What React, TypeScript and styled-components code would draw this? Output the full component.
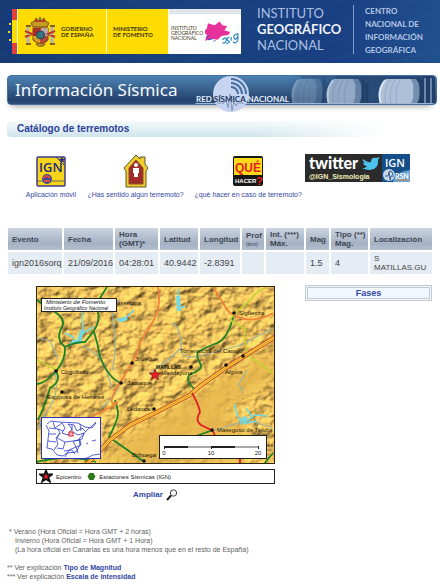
import React from 'react';
import styled, { createGlobalStyle } from 'styled-components';

const GlobalStyle = createGlobalStyle`
  * { box-sizing: border-box; }
  body {
    margin: 0;
    background: #fff;
    color: #444;
    font-family: "Liberation Sans", Arial, sans-serif;
  }
  a { color: #33479f; text-decoration: none; }
  svg { display: block; }
`;

const Header = styled.header`
  display: flex;
  align-items: flex-start;
  padding: 5px 7px 6px;
  color: #d8e3f4;
  font-family: Lato, sans-serif;
  background:
    repeating-linear-gradient(165deg, transparent 0 17px, rgba(120, 165, 220, 0.06) 17px 18px),
    linear-gradient(100deg, #173a72, #19427f 45%, #193f82 75%, #21508f);
`;

const Government = styled.div`
  display: flex;
  height: 45px;
  margin-top: 4px;
  color: #3c3510;
`;

const EuropeStrip = styled.svg`
  width: 10px;
  height: 45px;
`;

const GovPanel = styled.div<{ $width: number; $white?: boolean }>`
  display: flex;
  align-items: center;
  gap: ${(p) => (p.$white ? 2 : 5)}px;
  width: ${(p) => p.$width}px;
  padding: ${(p) => (p.$white ? '4px 2px 0' : '0 4px 0 6px')};
  border-left: 1px solid #fffbd5;
  background: ${(p) => (p.$white ? 'linear-gradient(#e2e5ec 5px, #fff 5px)' : '#fedc02')};
  font-weight: ${(p) => (p.$white ? 400 : 700)};
  font-size: ${(p) => (p.$white ? 5 : 6)}px;
  line-height: ${(p) => (p.$white ? 5 : 6)}px;
  white-space: nowrap;
`;

const Institute = styled.div`
  margin-left: 16px;
  width: 97px;
  height: 49px;
  font-size: 13px;
  line-height: 16px;
  color: #a9bfe0;
  border-right: 1px solid #7f9bc8;
  white-space: nowrap;
  strong { font-weight: 700; color: #eef3fb; }
`;

const Centre = styled.div`
  margin-left: 11px;
  font-size: 8px;
  line-height: 13px;
  font-weight: 700;
  color: #b3c6e4;
  white-space: nowrap;
`;

const Banner = styled.div`
  display: flex;
  justify-content: space-between;
  align-items: center;
  height: 30px;
  margin: 12px 3px 0 7px;
  padding-left: 7px;
  border: 1px solid #456f9e;
  border-radius: 4px;
  background: linear-gradient(#4a82b4, #3c6693 40%, #23426d 85%, #2d4d7b);
  box-shadow: -1px 6px 6px -5px rgba(0, 0, 0, 0.4);
`;

const BannerTitle = styled.h1`
  margin: 0;
  color: #f5f9ff;
  font: 400 17px/28px "Noto Sans", sans-serif;
  white-space: nowrap;
`;

const BannerArt = styled.svg`
  flex: none;
  width: 242px;
  height: 30px;
  overflow: visible;
`;

const SectionTitle = styled.h2`
  width: 86%;
  height: 16px;
  margin: 16px 0 0 7px;
  padding-left: 10px;
  border-radius: 4px 0 0 4px;
  background: linear-gradient(90deg, transparent 65%, #fff), linear-gradient(#f5fafb, #cfe5ec);
  color: #2c3f9c;
  font-size: 10px;
  line-height: 15px;
`;

const Shortcuts = styled.nav`
  display: grid;
  grid-template-columns: 58fr 112fr 114fr 104fr;
  padding: 17px 30px 0 22px;
  font-size: 7px;
  line-height: 10px;
`;

const Shortcut = styled.a`
  display: flex;
  flex-direction: column;
  align-items: center;
  gap: 2px;
  white-space: nowrap;
`;

const Quake = styled.table`
  width: calc(100% - 12px);
  margin: 26px 6px 0;
  table-layout: fixed;
  border-spacing: 2px;
  font-size: 9px;
  line-height: 9px;
  text-align: left;
  th, td { height: 22px; padding: 0 0 0 4px; vertical-align: middle; }
  th { font-size: 8px; background: linear-gradient(#cbd3df, #a4b2c4 70%, #b2bfcf); color: #3f4754; }
  td { background: #e6ecf4; }
  td:last-child { font-size: 8px; }
  small { display: block; font-size: 6px; line-height: 8px; font-weight: 400; }
`;

const Detail = styled.main`
  display: flex;
  justify-content: space-between;
  align-items: flex-start;
  padding: 9px 8px 0 36px;
`;

const Figure = styled.figure`
  display: flex;
  flex-direction: column;
  align-items: center;
  width: 239px;
  margin: 1px 0 0;
`;

const MapArt = styled.svg`
  width: 239px;
  height: 178px;
`;

const Legend = styled.figcaption`
  display: flex;
  align-items: center;
  gap: 6px;
  width: 100%;
  height: 15px;
  margin-top: 5px;
  padding-left: 2px;
  border: 1px solid #222;
  color: #222;
  font-size: 6px;
`;

const LegendItem = styled.span`
  display: flex;
  align-items: center;
  gap: 3px;
`;

const Enlarge = styled.a`
  display: flex;
  align-items: center;
  gap: 3px;
  margin-top: 5px;
  font-size: 8px;
  line-height: 12px;
  font-weight: 700;
`;

const Phases = styled.a`
  width: 127px;
  height: 16px;
  border: 3px double #c3c9d1;
  background: #f1f7fe;
  font-size: 9px;
  line-height: 10px;
  font-weight: 700;
  text-align: center;
`;

const Notes = styled.footer`
  padding: 26px 7px 0;
  font-size: 7px;
  line-height: 9px;
  color: #626262;
  p { margin: 0 0 9px; }
`;

const NoteLine = styled.span<{ $indent: number }>`
  display: block;
  padding-left: ${(p) => p.$indent}px;
`;

const STAR = '0,-6 1.5,-2 6,-2 2.4,0.8 3.8,5 0,2.5 -3.8,5 -2.4,0.8 -6,-2 -1.5,-2';

const CoatOfArms = () => (
  <svg width="32" height="32" viewBox="0 0 32 32">
    <path d="M7 7q9-6 18 0l-2 4H9z" fill="#c99a24" stroke="#77521a" />
    <path d="M10 6l2-4 3 3 1-4 1 4 3-3 2 4" fill="#b83a2b" stroke="#8b6420" />
    <path d="M9 12h15v12q-7 8-15 0z" fill="#b94836" stroke="#70452a" />
    <path d="M16 12v8H9v-8z" fill="#a92d2b" />
    <path d="M17 12h7v8h-7z" fill="#bba6a4" />
    <path d="M9 20h7v7q-7-1-7-7z" fill="#d3a31d" />
    <circle cx="16.500" cy="19" r="4" fill="#35767b" stroke="#273d60" />
    <path d="M4 10v17M28 10v17" stroke="#b6b5aa" strokeWidth="3" />
    <path d="M2 10h5M26 10h5M2 28h5M26 28h5" stroke="#8a5f24" strokeWidth="2" />
    <path d="M1 15l7 3-7 3M31 15l-7 3 7 3" fill="none" stroke="#bd352c" strokeWidth="2" />
    <path d="M12 28q5 4 9 0" fill="none" stroke="#9a7624" strokeWidth="2" />
  </svg>
);

const Drum = ({ x, w, o }: { x: number; w: number; o: number }) => (
  <g opacity={o}>
    <path d={`M${x + 8} 4h${w - 8}q-5 12 0 25H${x + 2}q-5-16 6-25z`} fill="#adc0d7" />
    <path d={`M${x + 7} 5q-8 11-4 24`} fill="none" stroke="#dce6f1" strokeWidth="2" />
    <path d={`M${x + 12} 5q-8 11-4 24M${x + 17} 5q-7 11-4 24M${x + 22} 5q-6 11-3 24`} fill="none" stroke="#91abc8" />
    <path d={`M${x + w} 4q8 10 1 25h-6q6-14 0-25z`} fill="#738eae" />
    <path d={`M${x + w + 5} 2v27M${x + w + 9} 8v20`} stroke="#203d66" strokeWidth="3" />
    <path d={`M${x + 10} 2h${w - 4}v3`} fill="none" stroke="#284a76" strokeWidth="2" />
  </g>
);

const Town = ({ x, y, tx, ty, name }: { x: number; y: number; tx: number; ty: number; name: string }) => (
  <g>
    <circle cx={x} cy={y} r="1.8" fill="#111" />
    <text x={tx} y={ty}>{name}</text>
  </g>
);

const QuakeMap = () => (
  <MapArt viewBox="36 286 239 178" role="img" aria-label="Mapa del epicentro">
    <defs>
      <filter id="relief" x="0" y="0" width="100%" height="100%" colorInterpolationFilters="sRGB">
        <feTurbulence type="fractalNoise" baseFrequency="0.07 0.085" numOctaves="3" seed="8" />
        <feColorMatrix values="0 0 0 0 0  0 0 0 0 0  0 0 0 0 0  1 0 0 0 0" />
        <feDiffuseLighting surfaceScale="4" diffuseConstant="1.25" lightingColor="#efc15c">
          <feDistantLight azimuth="225" elevation="55" />
        </feDiffuseLighting>
      </filter>
      <filter id="soft"><feGaussianBlur stdDeviation="7" /></filter>
    </defs>
    <rect x="36" y="286" width="239" height="178" fill="#e6bb5c" />
    <rect x="36" y="286" width="239" height="178" filter="url(#relief)" opacity="0.85" />
    <path d="M275 345L195 392L120 440L95 464H240L250 430L225 412L275 380z" fill="#e9b94f" opacity="0.9" filter="url(#soft)" />
    <g fill="none" stroke="#9cb3a0" strokeWidth="1.200">
      <path d="M120 300q-8 6-7 17t2 24-3 30M36 337l14 4 8 18M83 346q16 8 22 20l7 22M173 322q10 12 8 26t27 6 30-8 35-18M181 348q-12 12-31 25M121 383q-8 18-20 24M247 370l-8 14 4 9M55 371q4 22-4 34t-14 24M213 431l35-11 25 8" />
    </g>
    <g fill="none" stroke="#73d9e3" strokeLinejoin="round">
      <path d="M83 308l-1 12 1 10-3 10M65 333l8 4 3 6M80 335l13-8M70 343l12-2M116 320l10-2 8-8M178 289l1 20 6-3M234 404l4 13 4 7 13-9 12 1M242 424l15-3M246 408l6 9" strokeWidth="1.500" />
      <path d="M82 330l-3 12h-7M119 321l8-3M178 296l1 15M241 420l6-2" strokeWidth="4" />
    </g>
    <g fill="none" stroke="#218126" strokeWidth="1.800">
      <path d="M37 300Q45 307 55 312Q66 319 62 327Q55 339 65 347Q75 342 85 342L93 332Q103 318 95 306L107 287M94 332Q98 344 100 357Q109 379 121 383M65 347Q66 360 56 371Q46 383 37 384M56 371q6 10-6 17-5 18-12 32" />
      <path d="M234 314q-6 25-17 29t-19 9q-2 5 2 11t-7 10 2 17M115 400q2 6 3 12t-9 25L143 461M36 462q35-8 60 0M160 450q30-12 53-20M273 453l-9 11" />
    </g>
    <g fill="none" stroke="#f08338" strokeWidth="1.800">
      <path d="M158 287q4 22-7 38t-13 24-17 32-6 22-20 12-18-1M213 287l15 24 6 4q18 10 39-2M60 457l-3 7" />
    </g>
    <path d="M267 287q-11 4-17 13l-16 14-4 6 15 9q-2 14 4 27l24 17M37 360l18 9" fill="none" stroke="#c8cf35" strokeWidth="1.800" />
    <path d="M275 337L243 357L227 367L200 386L190 395L155 413L130 425L110 440L87 464" fill="none" stroke="#cc5428" strokeWidth="4.500" />
    <path d="M275 337L243 357L227 367L200 386L190 395L155 413L130 425L110 440L87 464" fill="none" stroke="#ffe23e" strokeWidth="2.500" />
    <path d="M275 337L243 357L227 367L200 386L190 395L155 413L130 425L110 440L87 464" fill="none" stroke="#d36a2b" strokeWidth="0.700" />
    <path d="M192 393q7 12 8 19-6 10 3 14l10 5 2 5M240 458v6" fill="none" stroke="#e01f27" strokeWidth="1.800" />
    <g fontFamily="Liberation Sans" fontSize="6" fill="#1f1a0c">
      <text x="117" y="305">asencina</text>
      <Town x={56} y={371} tx={61} ty={374} name="Cogolludo" />
      <Town x={132} y={363} tx={135} ty={361} name="Jirueque" />
      <Town x={121} y={383} tx={127} ty={385} name="Jadraque" />
      <Town x={234} y={313} tx={239} ty={315} name="Sigüenza" />
      <Town x={243} y={356} tx={180} ty={353} name="Torremocha del Campo" />
      <Town x={226} y={365} tx={225} ty={374} name="Algora" />
      <Town x={191} y={367} tx={161} ty={375} name="Mandayona" />
      <Town x={62} y={392} tx={47} ty={399} name="Espinosa de Henares" />
      <Town x={154} y={409} tx={127} ty={411} name="Ledanca" />
      <Town x={212} y={430} tx={217} ty={432} name="Masegoso de Tajuña" />
      <Town x={144} y={461} tx={132} ty={457} name="Brihuega" />
      <text x="267" y="447">es</text>
      <text x="156" y="369" fontSize="5" fontWeight="700">MATILLAS</text>
    </g>
    <polygon points={STAR} transform="translate(155 375)" fill="#ee1c24" stroke="#5c1515" strokeWidth="0.600" />
    <g fill="#fff" stroke="#222">
      <rect x="41.500" y="298.500" width="75" height="13" />
      <rect x="41.500" y="417.500" width="59" height="41" stroke="#2a35b5" />
      <rect x="159.500" y="435.500" width="107" height="23" />
    </g>
    <g fontFamily="Liberation Sans" fontStyle="italic" fill="#111">
      <text x="46" y="304" fontSize="6">Ministerio de Fomento</text>
      <text x="44" y="310" fontSize="5">Instituto Geográfico Nacional</text>
    </g>
    <g fill="none" stroke="#2c39c5" strokeWidth="0.800">
      <path d="M47 424l4-3 8 1 19 1 7 4 7 1 4-5M46 425l3 6-2 17 5 1 5 6 6 1 4-3 9-1 4-7-1-6 8-9 5-4 4-4M80 459l7-1 6-3 8-1" />
      <path d="M49 428l9 1 2 4-4 5 2 6-4 6M53 422l2 6 7-5 3 5-3 5 6 2 4-6-4-5 6 1 3 6 5-3 4 4M60 433l-3 5 8 4-2 7-6-1M65 442l8-1 3 6-7 3-4 7M68 435l5-3 5 3 6-2-2 6-8 2M73 441l7-1 1 5-5 2 2 6M64 451l8-1 3 4M86 444l2-1M92 441l4-1" />
      <path d="M49 434l7 0M48 441l8 1M58 429l5 2M72 425v6M80 424l1 7" />
    </g>
    <rect x="69" y="432" width="4" height="4" fill="#fbb" stroke="#e01f27" />
    <path d="M164 447h94" stroke="#aaa" strokeWidth="2" />
    <path d="M164 447h24M212 447h23" stroke="#222" strokeWidth="2" />
    <path d="M164.500 446v3M211.500 446v3M258.500 446v3" stroke="#222" />
    <g fontFamily="Liberation Sans" fontSize="6" fill="#222" textAnchor="middle">
      <text x="164" y="455">0</text>
      <text x="211" y="455">10</text>
      <text x="258" y="455">20</text>
    </g>
    <rect x="36.500" y="286.500" width="238" height="177" fill="none" stroke="#30260f" />
  </MapArt>
);

const COLUMNS = [54, 49, 43, 38, 40, 22, 38, 23, 37, 62];

export default function App() {
  return (
    <>
      <GlobalStyle />
      <Header>
        <Government>
          <EuropeStrip viewBox="0 0 10 45">
            <path d="M0 0h5v45H0z" fill="#123b83" />
            <path d="M5 0h5v45H5z" fill="#fedc02" />
            <path d="M5 0h5v11H5zM5 34h5v11H5z" fill="#e4403a" />
            <path d="M2 15h2M1 23h2M2 31h2" stroke="#fedc02" strokeWidth="2" />
          </EuropeStrip>
          <GovPanel $width={89}><CoatOfArms /><div>GOBIERNO<br />DE ESPAÑA</div></GovPanel>
          <GovPanel $width={62}><div>MINISTERIO<br />DE FOMENTO</div></GovPanel>
          <GovPanel $width={73} $white>
            <div>INSTITUTO<br />GEOGRÁFICO<br />NACIONAL</div>
            <svg width="35" height="26" viewBox="0 0 35 26">
              <path d="M3 2l7 2 5-4 3 4 5 1-3 4 6 2-2 3-7 1-4 4-6-1-7 2 2-6-4-3 4-4z" fill="#e9319c" />
              <path d="M1 17l3-2M3 19l5-1M9 21l2-2" stroke="#2a55b5" />
              <path d="M18 19q4-4 4 0t-4 3M25 16q-4 2-1 4t-2 3M27 16v4M34 13q-5 0-4 4t4-2v-3 7q-2 5-5 2" fill="none" stroke="#2786bd" strokeWidth="1.200" />
            </svg>
          </GovPanel>
        </Government>
        <Institute>INSTITUTO<br /><strong>GEOGRÁFICO</strong><br />NACIONAL</Institute>
        <Centre>CENTRO<br />NACIONAL DE<br />INFORMACIÓN<br />GEOGRÁFICA</Centre>
      </Header>

      <Banner>
        <BannerTitle>Información Sísmica</BannerTitle>
        <BannerArt viewBox="195 75 242 30">
          <defs>
            <linearGradient id="room" x1="0" x2="1">
              <stop offset="0" stopColor="#2b5180" stopOpacity="0" />
              <stop offset="0.400" stopColor="#2b5180" />
              <stop offset="1" stopColor="#213e68" />
            </linearGradient>
            <clipPath id="band"><rect x="195" y="76" width="241" height="28" rx="3" /></clipPath>
          </defs>
          <g clipPath="url(#band)">
            <rect x="285" y="76" width="151" height="28" fill="url(#room)" />
            <g transform="translate(0 75)">
              <Drum x={292} w={28} o={0.4} />
              <Drum x={327} w={32} o={0.8} />
              <Drum x={379} w={38} o={1} />
            </g>
            <path d="M426 78v25M432 78v25" stroke="#6e88a8" strokeWidth="2" />
            <path d="M195 103.500h241" stroke="#9db4d4" />
          </g>
          <circle cx="232" cy="94" r="18" fill="#c6d4f1" />
          <path d="M232 79a15 15 0 0 1 15 15M232 83a11 11 0 0 1 11 11M232 87a7 7 0 0 1 7 7" fill="none" stroke="#456d9f" strokeWidth="2" />
          <path d="M218 103h7l2-3 2 8 2-14 2 17 2-10 2 5 2-3h6" fill="none" stroke="#8296b6" strokeWidth="1" />
          <text x="197" y="102" fontFamily="Lato" fontSize="8" fontWeight="700" fill="#e4ecf9">
            RED <tspan fill="#19335d">SÍSMICA</tspan> NACIONAL
          </text>
        </BannerArt>
      </Banner>

      <SectionTitle>Catálogo de terremotos</SectionTitle>

      <Shortcuts>
        <Shortcut href="#movil">
          <svg width="30" height="34" viewBox="0 0 30 34">
            <rect x="1" y="3" width="28" height="29" rx="1" fill="#f7d51b" stroke="#3d3e8c" strokeWidth="1.500" />
            <path d="M20 3l9 9" stroke="#3d3e8c" />
            <polygon points={STAR} transform="translate(26 6) scale(.6)" fill="#292b78" />
            <text x="3" y="18" fontFamily="Open Sans" fontWeight="600" fontSize="13" fill="#292b78">IGN</text>
            <path d="M2 27h26" stroke="#6c6751" />
            <circle cx="11" cy="25" r="5" fill="#414b91" />
            <path d="M7 24q4-4 7 0M8 27h6" stroke="#d64b47" strokeWidth="2" fill="none" />
          </svg>
          Aplicación móvil
        </Shortcut>
        <Shortcut href="#sentido">
          <svg width="26" height="34" viewBox="0 0 26 34">
            <path d="M13 1l4 4V3h5v7l3 4-2 3v16H3V17l-2-3z" fill="#efcd2b" stroke="#5b5430" />
            <path d="M13 6l7 8v16H6V14z" fill="#a02d2c" stroke="#8a4a2a" />
            <circle cx="13" cy="11" r="2" fill="#fff" />
            <path d="M10 14h6v5h-1v4h-4v-4h-1z" fill="#fff" />
          </svg>
          ¿Has sentido algún terremoto?
        </Shortcut>
        <Shortcut href="#quehacer">
          <svg width="32" height="34" viewBox="0 0 32 34">
            <rect x="1" y="2" width="30" height="30" rx="2" fill="#171717" />
            <path d="M2 4h28v17H2z" fill="#ffd91b" />
            <g fontFamily="Liberation Sans" fontWeight="700">
              <text x="3" y="18" fontSize="12" fill="#df2422">QUÉ</text>
              <text x="3" y="29" fontSize="6" fill="#fff">HACER</text>
              <text x="24" y="31" fontSize="11" fill="#e32420">?</text>
            </g>
          </svg>
          ¿qué hacer en caso de terremoto?
        </Shortcut>
        <Shortcut href="#twitter">
          <svg width="105" height="28" viewBox="0 0 105 28">
            <path d="M0 0h77v28H0z" fill="#2b2b2b" />
            <path d="M77 0h28v28H77z" fill="#154f8a" />
            <text x="4" y="15" fontFamily="Lato" fontWeight="900" fontSize="16" fill="#fff">twitter</text>
            <path d="M58 5q4 4 8 3 0-5 5-4l4-1-2 3q1 9-8 10-5 0-8-2 4 0 5-2-3 0-4-3h2q-3-2-2-4z" fill="#4cc3ef" />
            <text x="4" y="25" fontFamily="Liberation Sans" fontWeight="700" fontSize="7" fill="#f2efb9">@IGN_Sismologia</text>
            <text x="80" y="13" fontFamily="Open Sans" fontWeight="600" fontSize="11" fill="#fff">IGN</text>
            <path d="M88 28q2-10 17-12v12z" fill="#6aa5d5" />
            <circle cx="84" cy="21" r="6" fill="#c6d7ea" />
            <path d="M84 17q4 0 4 4M80 22h3l1-4 1 8 1-4h3" stroke="#36598a" fill="none" />
            <text x="90" y="25" fontFamily="Lato" fontWeight="700" fontSize="7" fill="#fff">RSN</text>
            <path d="M92 26h12" stroke="#d98640" />
          </svg>
        </Shortcut>
      </Shortcuts>

      <Quake>
        <colgroup>{COLUMNS.map((w, i) => <col key={i} width={w} />)}</colgroup>
        <thead>
          <tr>
            <th>Evento</th><th>Fecha</th><th>Hora<br />(GMT)*</th><th>Latitud</th><th>Longitud</th>
            <th>Prof<small>(km)</small></th><th>Int. (***)<br />Máx.</th><th>Mag</th><th>Tipo (**)<br />Mag.</th><th>Localización</th>
          </tr>
        </thead>
        <tbody>
          <tr>
            <td>ign2016sorq</td><td>21/09/2016</td><td>04:28:01</td><td>40.9442</td><td>-2.8391</td>
            <td /><td /><td>1.5</td><td>4</td><td>S MATILLAS.GU</td>
          </tr>
        </tbody>
      </Quake>

      <Detail>
        <Figure>
          <QuakeMap />
          <Legend>
            <LegendItem>
              <svg width="14" height="13" viewBox="-7 -6.500 14 13">
                <polygon points={STAR} fill="#e01f27" stroke="#111" strokeWidth="1.800" />
              </svg>
              Epicentro
            </LegendItem>
            <LegendItem>
              <svg width="9" height="9" viewBox="0 0 9 9"><path d="M2.500 1h4l2 3.500-2 3.500h-4l-2-3.500z" fill="#2f7a1e" /></svg>
              Estaciones Sísmicas (IGN)
            </LegendItem>
          </Legend>
          <Enlarge href="#ampliar">
            Ampliar
            <svg width="12" height="12" viewBox="0 0 12 12">
              <circle cx="7.500" cy="4" r="3.200" fill="#eef0f2" stroke="#444" />
              <path d="M5 6.500L1 11" stroke="#222" strokeWidth="2" />
            </svg>
          </Enlarge>
        </Figure>
        <Phases href="#fases">Fases</Phases>
      </Detail>

      <Notes>
        <p>
          <NoteLine $indent={2}>* Verano (Hora Oficial = Hora GMT + 2 horas)</NoteLine>
          <NoteLine $indent={8}>Invierno (Hora Oficial = Hora GMT + 1 Hora)</NoteLine>
          <NoteLine $indent={8}>(La hora oficial en Canarias es una hora menos que en el resto de España)</NoteLine>
        </p>
        <NoteLine $indent={0}>** Ver explicación <a href="#magnitud"><b>Tipo de Magnitud</b></a></NoteLine>
        <NoteLine $indent={0}>*** Ver explicación <a href="#intensidad"><b>Escala de intensidad</b></a></NoteLine>
      </Notes>
    </>
  );
}
